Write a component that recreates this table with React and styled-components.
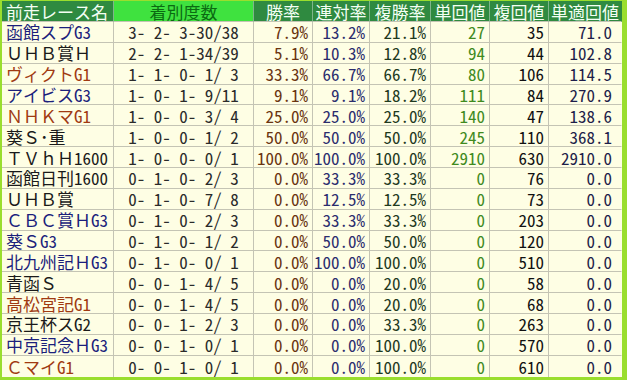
import React from "react";
import styled, { createGlobalStyle } from "styled-components";

const Global = createGlobalStyle`
  html, body { margin: 0; padding: 0; background: #ffffff; }
  #root { width: 627px; height: 380px; }
`;

const Frame = styled.div`
  width: 627px;
  height: 380px;
  box-sizing: border-box;
  border-style: solid;
  border-color: #9ade2e;
  border-width: 1px 5px 3px 2px;
  background: #fefee4;
  overflow: hidden;
`;

const Table = styled.table`
  width: 620px;
  table-layout: fixed;
  border-collapse: separate;
  border-spacing: 0;
  font-family: "Noto Sans Mono CJK JP", "Noto Sans CJK JP", "DejaVu Sans Mono", monospace;
  font-size: 17px;
  line-height: 19px;
`;

const HeadCell = styled.th`
  box-sizing: border-box;
  height: 21px;
  padding: 0;
  font-weight: 400;
  text-align: ${(p) => (p.$first ? "left" : "center")};
  padding-left: ${(p) => (p.$first ? "4px" : "0")};
  background: ${(p) => (p.$bright ? "#3fe23f" : "#2f8a40")};
  color: ${(p) => (p.$bright ? "#0b6a12" : "#f4fff4")};
  border-right: 1px solid ${(p) => (p.$last ? "transparent" : "#7fb58a")};
  border-bottom: 1px solid #c4c4b4;
  white-space: pre;
  overflow: hidden;
`;

const Row = styled.tr`
  height: 20.86px;
`;

const colors = {
  n: "#1a1a1a",
  g1: "#a03a12",
  g3: "#1c1f7c",
};

const NameCell = styled.td`
  box-sizing: border-box;
  padding: 0 0 0 4px;
  text-align: left;
  color: ${(p) => colors[p.$grade]};
  border-right: 1px solid #c4c4b4;
  border-bottom: ${(p) => (p.$last ? "0" : "1px solid #c4c4b4")};
  white-space: pre;
  overflow: hidden;
`;

const DataCell = styled.td`
  box-sizing: border-box;
  padding: 0 ${(p) => p.$pad || "4px"} 0 0;
  text-align: ${(p) => p.$align || "right"};
  color: ${(p) => p.$color};
  border-right: 1px solid ${(p) => (p.$edge ? "transparent" : "#c4c4b4")};
  border-bottom: ${(p) => (p.$last ? "0" : "1px solid #c4c4b4")};
  white-space: pre;
  overflow: hidden;
`;

const widths = [112, 140, 59, 57, 61, 59, 59, 73];

const headers = ["前走レース名", "着別度数", "勝率", "連対率", "複勝率", "単回値", "複回値", "単適回値"];

const colColors = ["#2a2a2a", "#6a3410", "#2b2d6e", "#1f3a1f", "#3f8a1e", "#111111", "#1e1e4a"];

const rows = [
  ["函館スプG3", "g3", "3- 2- 3-30/38", "7.9%", "13.2%", "21.1%", "27", "35", "71.0"],
  ["ＵＨＢ賞Ｈ", "n", "2- 2- 1-34/39", "5.1%", "10.3%", "12.8%", "94", "44", "102.8"],
  ["ヴィクトG1", "g1", "1- 1- 0- 1/ 3", "33.3%", "66.7%", "66.7%", "80", "106", "114.5"],
  ["アイビスG3", "g3", "1- 0- 1- 9/11", "9.1%", "9.1%", "18.2%", "111", "84", "270.9"],
  ["ＮＨＫマG1", "g1", "1- 0- 0- 3/ 4", "25.0%", "25.0%", "25.0%", "140", "47", "138.6"],
  ["葵Ｓ･重", "n", "1- 0- 0- 1/ 2", "50.0%", "50.0%", "50.0%", "245", "110", "368.1"],
  ["ＴＶｈＨ1600", "n", "1- 0- 0- 0/ 1", "100.0%", "100.0%", "100.0%", "2910", "630", "2910.0"],
  ["函館日刊1600", "n", "0- 1- 0- 2/ 3", "0.0%", "33.3%", "33.3%", "0", "76", "0.0"],
  ["ＵＨＢ賞", "n", "0- 1- 0- 7/ 8", "0.0%", "12.5%", "12.5%", "0", "73", "0.0"],
  ["ＣＢＣ賞ＨG3", "g3", "0- 1- 0- 2/ 3", "0.0%", "33.3%", "33.3%", "0", "203", "0.0"],
  ["葵ＳG3", "g3", "0- 1- 0- 1/ 2", "0.0%", "50.0%", "50.0%", "0", "120", "0.0"],
  ["北九州記ＨG3", "g3", "0- 1- 0- 0/ 1", "0.0%", "100.0%", "100.0%", "0", "510", "0.0"],
  ["青函Ｓ", "n", "0- 0- 1- 4/ 5", "0.0%", "0.0%", "20.0%", "0", "58", "0.0"],
  ["高松宮記G1", "g1", "0- 0- 1- 4/ 5", "0.0%", "0.0%", "20.0%", "0", "68", "0.0"],
  ["京王杯スG2", "n", "0- 0- 1- 2/ 3", "0.0%", "0.0%", "33.3%", "0", "263", "0.0"],
  ["中京記念ＨG3", "g3", "0- 0- 1- 0/ 1", "0.0%", "0.0%", "100.0%", "0", "570", "0.0"],
  ["ＣマイG1", "g1", "0- 0- 1- 0/ 1", "0.0%", "0.0%", "100.0%", "0", "610", "0.0"],
];

export default function App() {
  return (
    <>
      <Global />
      <Frame>
        <Table>
          <colgroup>
            {widths.map((w, i) => (
              <col key={i} style={{ width: w }} />
            ))}
          </colgroup>
          <thead>
            <tr>
              {headers.map((h, i) => (
                <HeadCell key={h} $first={i === 0} $bright={i === 1} $last={i === headers.length - 1}>
                  {h}
                </HeadCell>
              ))}
            </tr>
          </thead>
          <tbody>
            {rows.map((r, ri) => {
              const last = ri === rows.length - 1;
              return (
                <Row key={ri}>
                  <NameCell $grade={r[1]} $last={last}>{r[0]}</NameCell>
                  {r.slice(2).map((v, ci) => (
                    <DataCell
                      key={ci}
                      $last={last}
                      $color={colColors[ci]}
                      $align={ci === 0 ? "center" : "right"}
                      $pad={ci === 0 ? "0" : ci === 6 ? "9px" : "4px"}
                      $edge={ci === 6}
                    >
                      {v}
                    </DataCell>
                  ))}
                </Row>
              );
            })}
          </tbody>
        </Table>
      </Frame>
    </>
  );
}
